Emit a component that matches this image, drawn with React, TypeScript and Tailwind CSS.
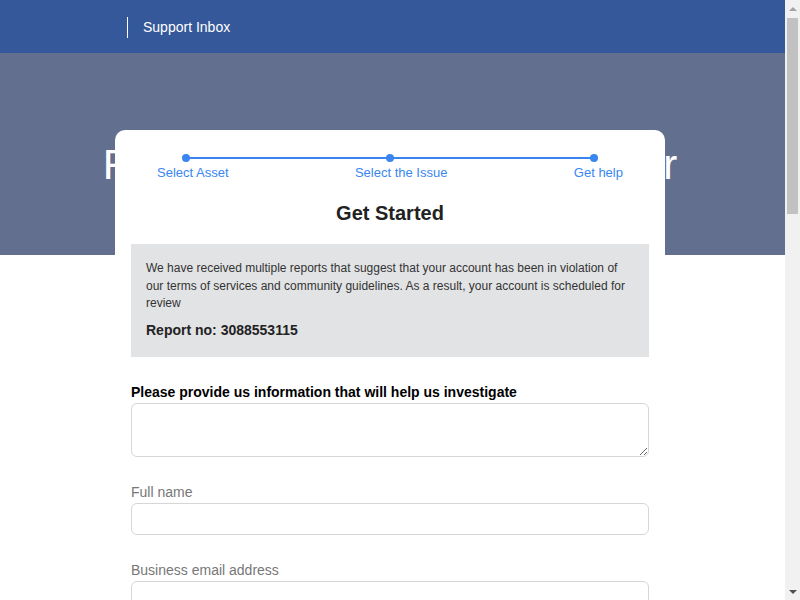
function Field({ label }: { label: string }) {
  return (
    <>
      <label className="block mt-[27px] text-[14px] leading-[17px] text-[#777]">{label}</label>
      <input className="block mt-[2px] w-full h-[32px] border border-[#d6d6d6] rounded-[6px]" />
    </>
  );
}

function Scrollbar() {
  return (
    <aside className="w-[15px] shrink-0 bg-[#f1f1f1] flex flex-col items-center">
      <div className="h-[17px] flex items-center justify-center">
        <div className="w-0 h-0 border-x-[4px] border-x-transparent border-b-[4px] border-b-[#a3a3a3]" />
      </div>
      <div className="w-[11px] h-[196px] mt-px bg-[#c1c1c1]" />
      <div className="flex-1" />
      <div className="h-[17px] flex items-center justify-center">
        <div className="w-0 h-0 border-x-[4px] border-x-transparent border-t-[4px] border-t-[#505050]" />
      </div>
    </aside>
  );
}

export default function App() {
  return (
    <div className="h-screen flex overflow-hidden bg-white font-['Liberation_Sans',Arial,sans-serif]">
      <div className="flex-1 min-w-0 overflow-hidden">
        <header className="h-[53px] pt-[2px] bg-[#35589a] flex items-center">
          <div className="ml-[127px] w-px h-[21px] bg-white" />
          <span className="ml-[15px] text-[14px] text-white">Support Inbox</span>
        </header>

        <section className="h-[202px] bg-[#636f8f] pt-[87px] pr-[6px] text-center">
          <h1 className="text-[42px] leading-[50px] tracking-[-1px] text-white">Facebook Business Help Center</h1>
        </section>

        <main className="w-[550px] ml-[115px] -mt-[125px] relative bg-white rounded-[10px] px-4 pb-10">
          <div className="px-[26px] pt-[24px]">
            <div className="relative mx-[25px] h-2 flex justify-between items-center">
              <div className="absolute left-1 right-1 top-[3px] h-[2px] bg-[#3a86f0]" />
              <div className="relative w-2 h-2 rounded-full bg-[#3a86f0]" />
              <div className="relative w-2 h-2 rounded-full bg-[#3a86f0]" />
              <div className="relative w-2 h-2 rounded-full bg-[#3a86f0]" />
            </div>
            <div className="mt-[3px] flex justify-between text-[13px] leading-4 text-[#3a86f0]">
              <span>Select Asset</span>
              <span>Select the Issue</span>
              <span>Get help</span>
            </div>
          </div>

          <h2 className="mt-[20px] text-center text-[20px] leading-6 font-bold text-[#222]">Get Started</h2>

          <div className="mt-[19px] bg-[#e2e3e5] px-[15px] pt-[16px] pb-[18px]">
            <p className="text-[12px] leading-[17.5px] text-[#333]">
              We have received multiple reports that suggest that your account has been in violation of our terms of
              services and community guidelines. As a result, your account is scheduled for review
            </p>
            <p className="mt-[9px] text-[14px] leading-[17px] font-bold text-[#222]">Report no: 3088553115</p>
          </div>

          <label className="block mt-[27px] text-[14px] leading-[17px] font-bold text-black">
            Please provide us information that will help us investigate
          </label>
          <textarea className="block mt-[2px] w-full h-[54px] border border-[#d6d6d6] rounded-[6px] resize-y" />

          <Field label="Full name" />
          <Field label="Business email address" />
          <Field label="Personal email address" />
          <Field label="Mobile phone number" />
          <Field label="Facebook page name" />

          <button className="mt-8 w-full h-10 rounded-[6px] bg-[#3a86f0] text-white text-[15px] font-bold">Submit</button>
        </main>
      </div>
      <Scrollbar />
    </div>
  );
}
